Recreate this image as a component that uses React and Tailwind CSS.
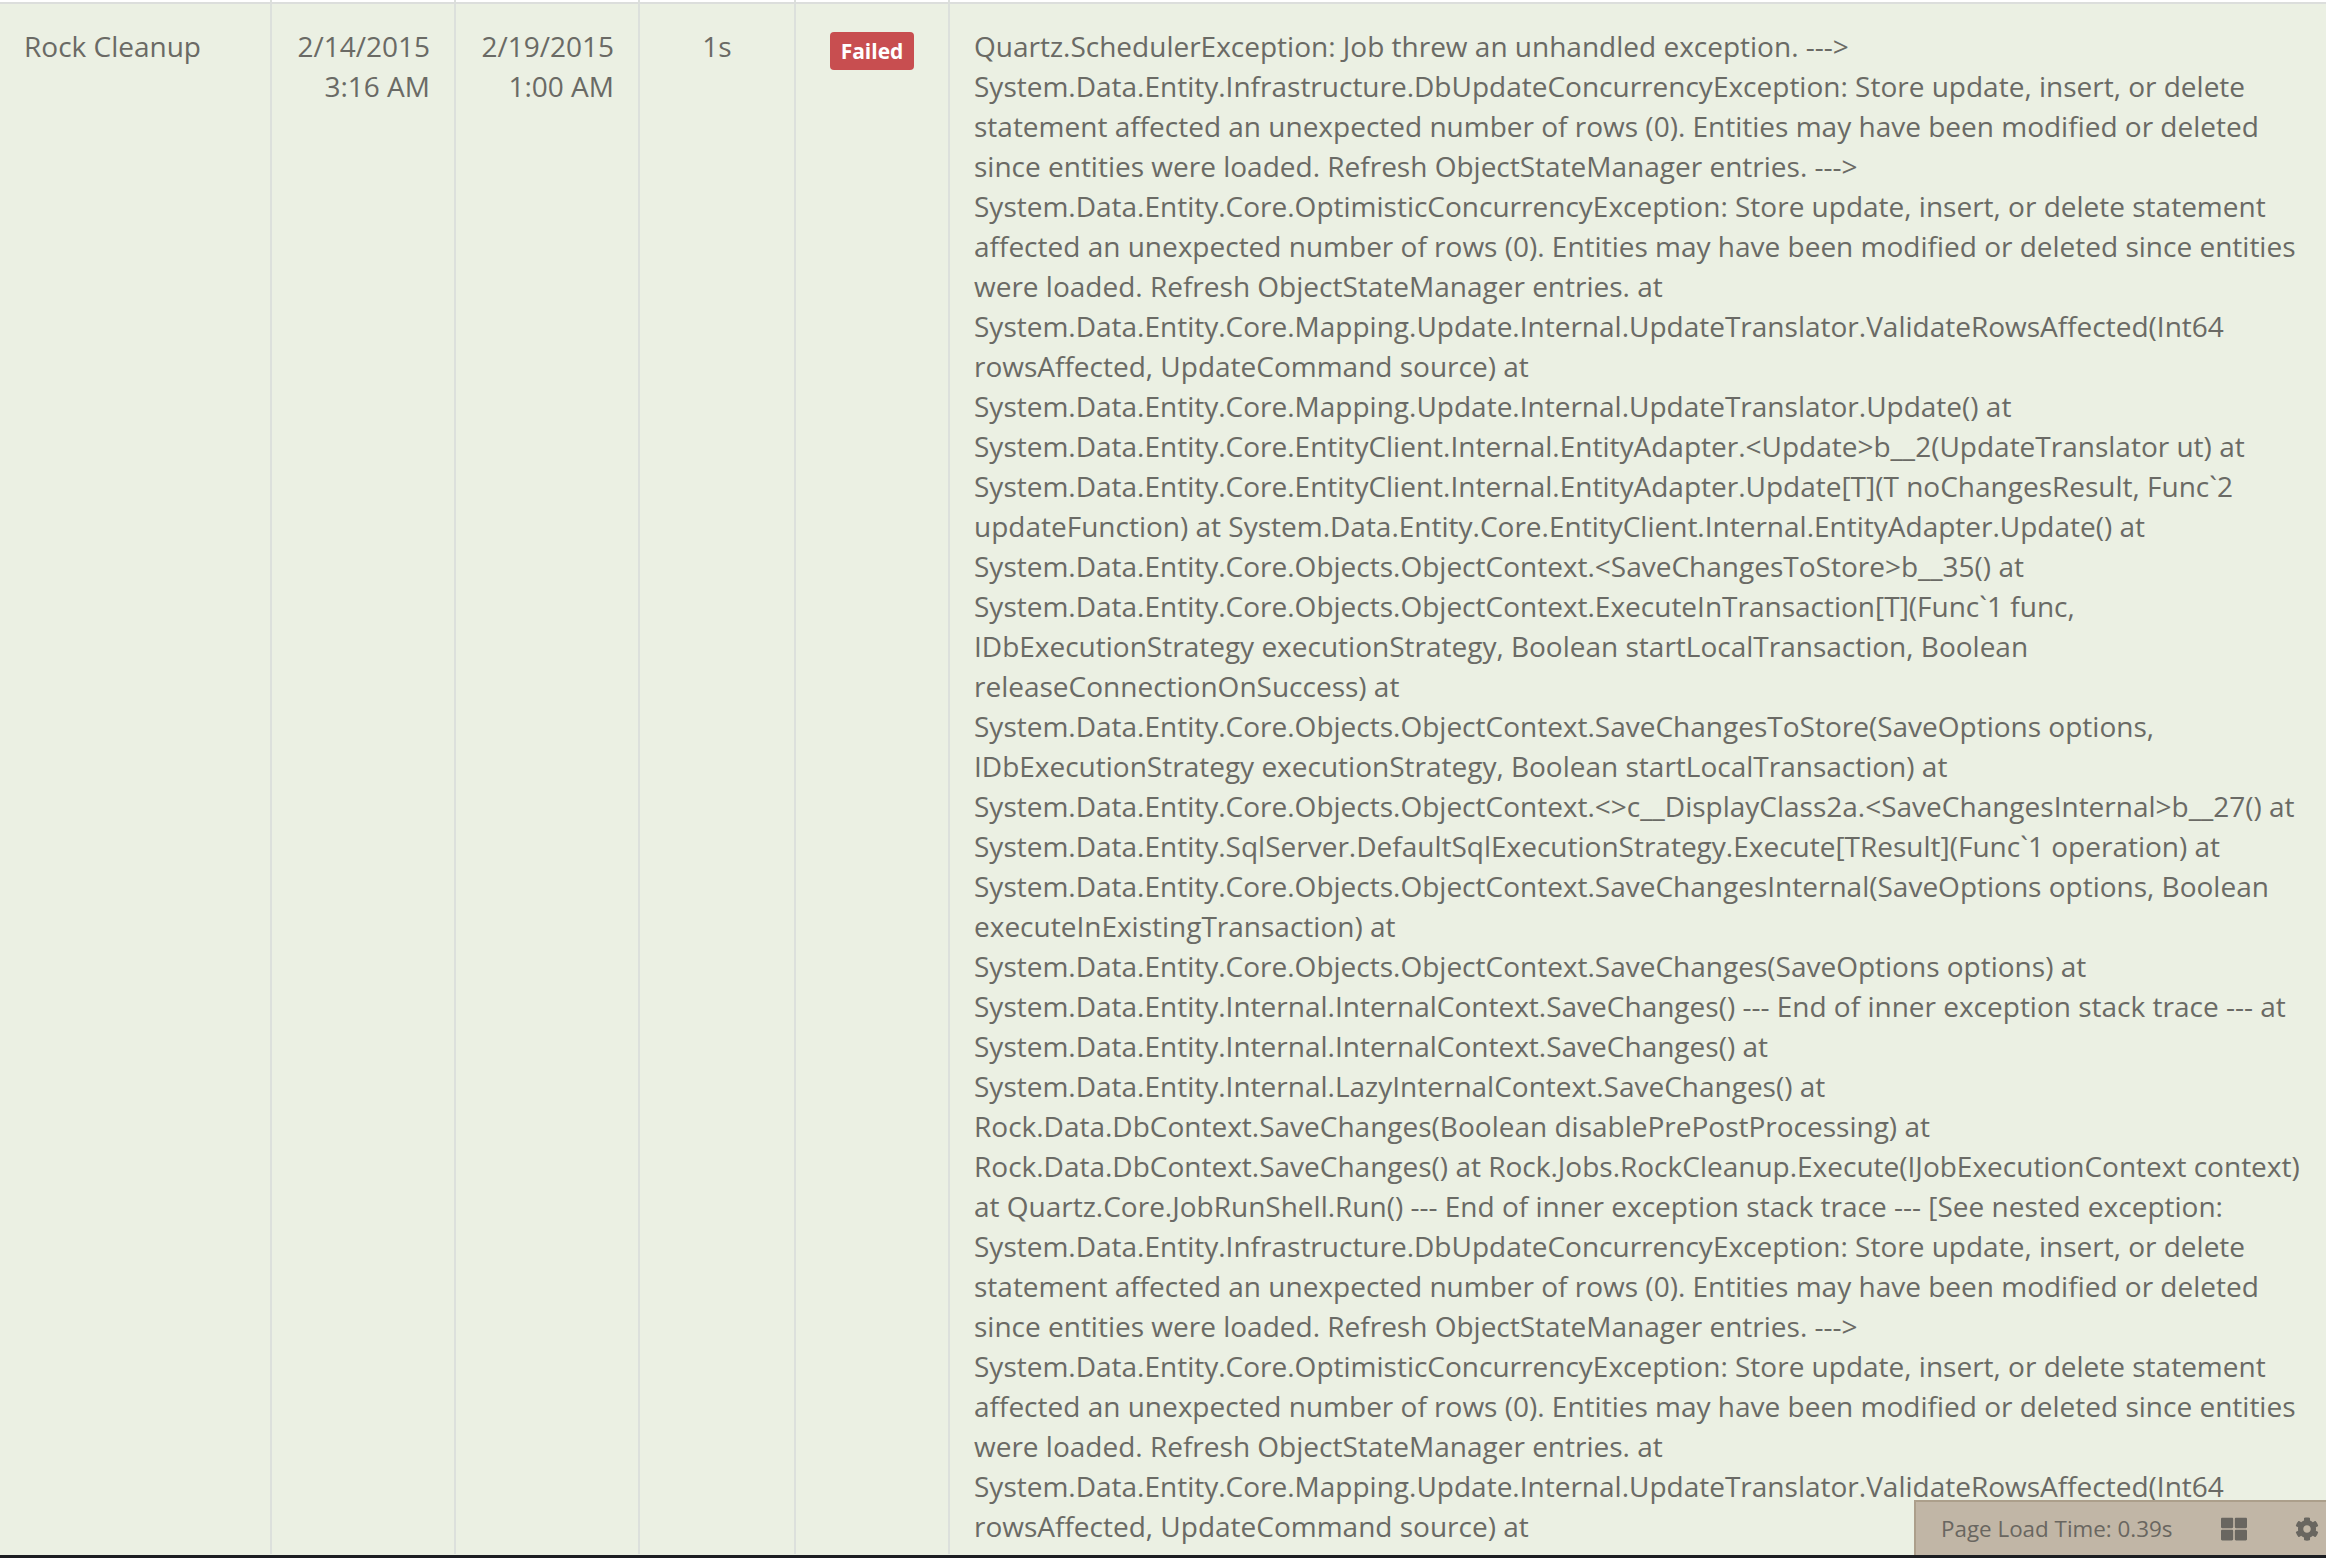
import { FaThLarge, FaCog } from "react-icons/fa";

const trace = `Quartz.SchedulerException: Job threw an unhandled exception. ---> System.Data.Entity.Infrastructure.DbUpdateConcurrencyException: Store update, insert, or delete statement affected an unexpected number of rows (0). Entities may have been modified or deleted since entities were loaded. Refresh ObjectStateManager entries. ---> System.Data.Entity.Core.OptimisticConcurrencyException: Store update, insert, or delete statement affected an unexpected number of rows (0). Entities may have been modified or deleted since entities were loaded. Refresh ObjectStateManager entries. at System.Data.Entity.Core.Mapping.Update.Internal.UpdateTranslator.ValidateRowsAffected(Int64 rowsAffected, UpdateCommand source) at System.Data.Entity.Core.Mapping.Update.Internal.UpdateTranslator.Update() at System.Data.Entity.Core.EntityClient.Internal.EntityAdapter.<Update>b__2(UpdateTranslator ut) at System.Data.Entity.Core.EntityClient.Internal.EntityAdapter.Update[T](T noChangesResult, Func\`2 updateFunction) at System.Data.Entity.Core.EntityClient.Internal.EntityAdapter.Update() at System.Data.Entity.Core.Objects.ObjectContext.<SaveChangesToStore>b__35() at System.Data.Entity.Core.Objects.ObjectContext.ExecuteInTransaction[T](Func\`1 func, IDbExecutionStrategy executionStrategy, Boolean startLocalTransaction, Boolean releaseConnectionOnSuccess) at System.Data.Entity.Core.Objects.ObjectContext.SaveChangesToStore(SaveOptions options, IDbExecutionStrategy executionStrategy, Boolean startLocalTransaction) at System.Data.Entity.Core.Objects.ObjectContext.<>c__DisplayClass2a.<SaveChangesInternal>b__27() at System.Data.Entity.SqlServer.DefaultSqlExecutionStrategy.Execute[TResult](Func\`1 operation) at System.Data.Entity.Core.Objects.ObjectContext.SaveChangesInternal(SaveOptions options, Boolean executeInExistingTransaction) at System.Data.Entity.Core.Objects.ObjectContext.SaveChanges(SaveOptions options) at System.Data.Entity.Internal.InternalContext.SaveChanges() --- End of inner exception stack trace --- at System.Data.Entity.Internal.InternalContext.SaveChanges() at System.Data.Entity.Internal.LazyInternalContext.SaveChanges() at Rock.Data.DbContext.SaveChanges(Boolean disablePrePostProcessing) at Rock.Data.DbContext.SaveChanges() at Rock.Jobs.RockCleanup.Execute(IJobExecutionContext context) at Quartz.Core.JobRunShell.Run() --- End of inner exception stack trace --- [See nested exception: System.Data.Entity.Infrastructure.DbUpdateConcurrencyException: Store update, insert, or delete statement affected an unexpected number of rows (0). Entities may have been modified or deleted since entities were loaded. Refresh ObjectStateManager entries. ---> System.Data.Entity.Core.OptimisticConcurrencyException: Store update, insert, or delete statement affected an unexpected number of rows (0). Entities may have been modified or deleted since entities were loaded. Refresh ObjectStateManager entries. at System.Data.Entity.Core.Mapping.Update.Internal.UpdateTranslator.ValidateRowsAffected(Int64 rowsAffected, UpdateCommand source) at`;

const cell = "border-r-2 border-[#dce0dc] pt-[22px] shrink-0";
const stub = "h-[2px] shrink-0 border-r-2 border-[#dce0dc]";

export default function App() {
  return (
    <div className="relative h-[1558px] w-full overflow-hidden bg-[#ebf0e3] font-['Open_Sans',sans-serif] text-[28px] leading-[40px] text-[#6a6a65]">
      {/* end of the previous row */}
      <div className="flex bg-white">
        <div className={`${stub} w-[272px]`} />
        <div className={`${stub} w-[184px]`} />
        <div className={`${stub} w-[184px]`} />
        <div className={`${stub} w-[156px]`} />
        <div className={`${stub} w-[154px]`} />
      </div>
      <div className="h-[2px] bg-[#dcdedc]" />

      <div className="flex h-[1550px]">
        <div className={`${cell} w-[272px] pl-6`}>Rock Cleanup</div>
        <div className={`${cell} w-[184px] pr-6 text-right`}>2/14/2015<br />3:16 AM</div>
        <div className={`${cell} w-[184px] pr-6 text-right`}>2/19/2015<br />1:00 AM</div>
        <div className={`${cell} w-[156px] text-center`}>1s</div>
        <div className={`${cell} w-[154px] pl-[34px]`}>
          <span className="mt-[6px] flex h-[38px] w-[84px] items-center justify-center rounded-[4px] bg-[#c84e50] text-[21px] font-bold leading-none text-white">
            Failed
          </span>
        </div>
        <div className="min-w-0 flex-1 pl-[24px] pr-[24px] pt-[22px]">{trace}</div>
      </div>

      {/* page stats badge */}
      <div className="absolute bottom-[3px] right-0 flex h-[55px] w-[412px] items-center whitespace-nowrap border-l-2 border-t-2 border-[#ac9f8b] bg-[#c1b6a6] pl-[25px] text-[22.4px] text-[#696660]">
        <span>Page Load Time: 0.39s</span>
        <FaThLarge className="ml-[48px] shrink-0 text-[26px]" />
        <FaCog className="ml-[48px] shrink-0 text-[24px]" />
      </div>

      {/* dark strip at the bottom of the capture */}
      <div className="absolute inset-x-0 bottom-0 h-[3px] bg-[#1c1e22]" />
    </div>
  );
}
